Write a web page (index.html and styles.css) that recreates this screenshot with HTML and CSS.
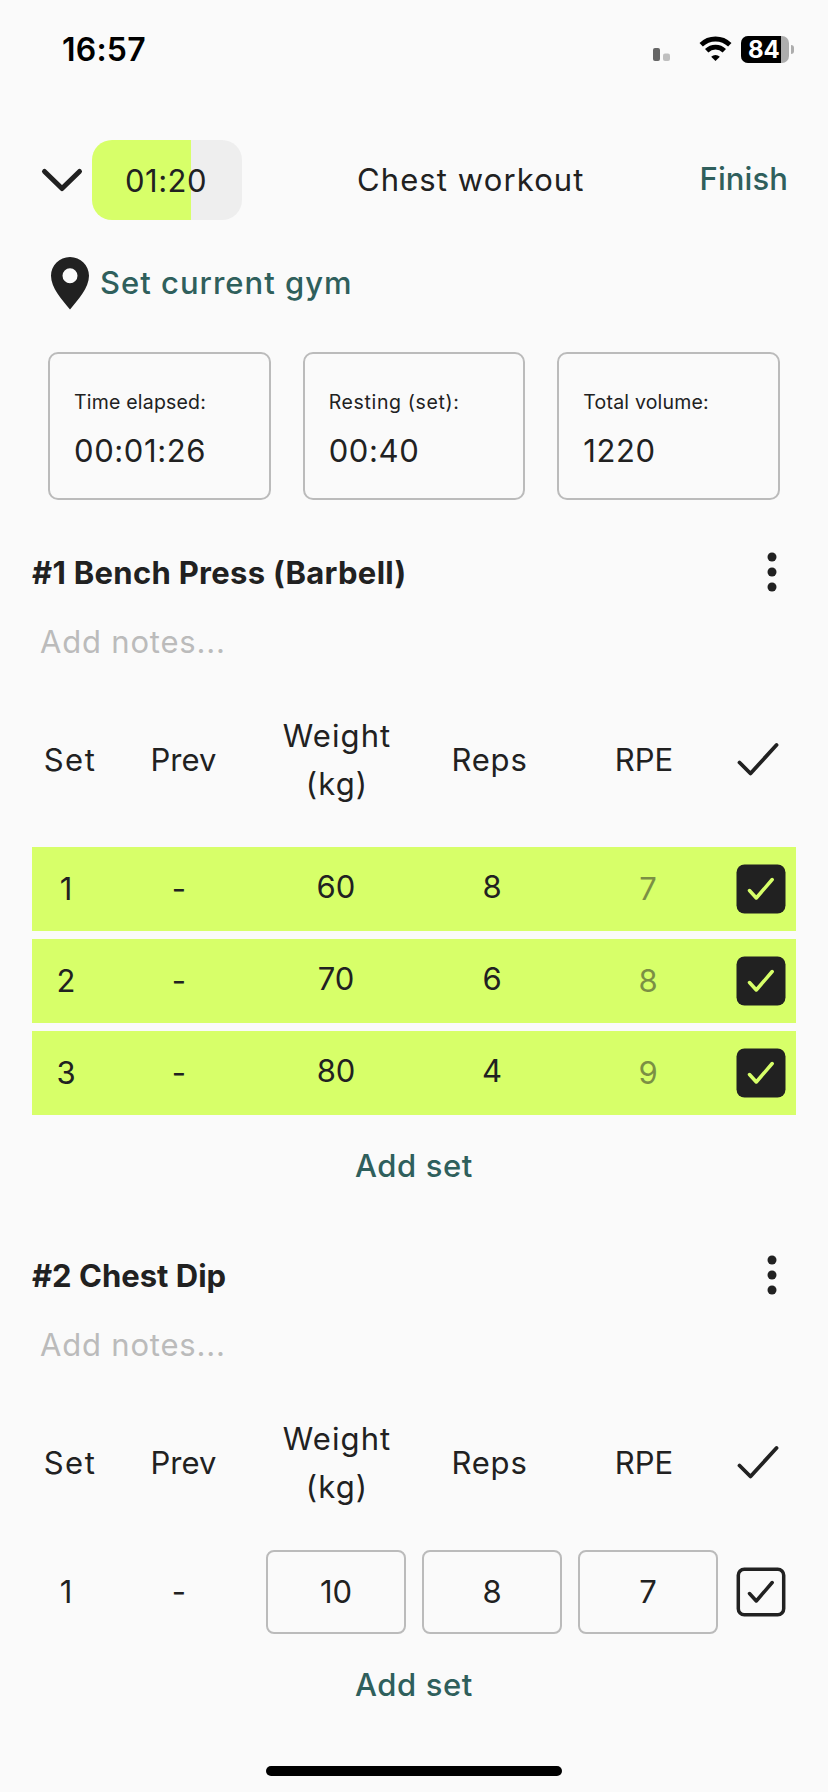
FILE: index.html
```html
<!DOCTYPE html>
<html lang="en">
<head>
<meta charset="utf-8">
<title>Chest workout</title>
<link rel="stylesheet" href="styles.css">
</head>
<body>
<header class="status">
  <span class="clock">16:57</span>
  <svg class="signals" width="82" height="27" viewBox="0 0 82 27">
    <rect x="1" y="12" width="7" height="13" rx="2" fill="#666"/>
    <rect x="11" y="17.500" width="7" height="7.500" rx="2" fill="#bfbfbf"/>
    <g fill="none" stroke="#000" stroke-width="4.800">
      <path d="M49.200 8.800a20.500 20.500 0 0 1 28.600 0"/>
      <path d="M54.700 14.800a12.500 12.500 0 0 1 17.600 0"/>
    </g>
    <path d="M63.500 25l-4.300-4.200a6.200 6.200 0 0 1 8.600 0z" fill="#000"/>
  </svg>
  <span class="battery"><span class="level">84</span></span><span class="nub"></span>
</header>

<nav class="topbar">
  <svg class="chevron" width="44" height="30" viewBox="0 0 44 30"><path d="M4.500 6.500L22 23.500L39.500 6.500" fill="none" stroke="#212121" stroke-width="5" stroke-linecap="round" stroke-linejoin="round"/></svg>
  <div class="timer">01:20</div>
  <h1 class="title">Chest workout</h1>
  <a class="link finish">Finish</a>
</nav>

<div class="gym">
  <svg class="pin" width="38" height="53" viewBox="0 0 38 53"><path fill="#212121" fill-rule="evenodd" d="M19 0C8.500 0 0 8.300 0 18.700C0 31 11 42.500 19 52.500C27 42.500 38 31 38 18.700C38 8.300 29.500 0 19 0zM19 11.300a7.500 7.500 0 1 1 0 15a7.500 7.500 0 0 1 0-15z"/></svg>
  <a class="link gym-link">Set current gym</a>
</div>

<section class="stats">
  <div class="stat"><span class="label">Time elapsed:</span><span class="value">00:01:26</span></div>
  <div class="stat"><span class="label label-wide">Resting (set):</span><span class="value">00:40</span></div>
  <div class="stat"><span class="label">Total volume:</span><span class="value">1220</span></div>
</section>

<section class="exercise">
  <div class="heading"><h2 class="spaced">#1 Bench Press (Barbell)</h2>
    <svg class="menu" width="10" height="40" viewBox="0 0 10 40" fill="#212121"><circle cx="5" cy="5" r="4.500"/><circle cx="5" cy="20" r="4.500"/><circle cx="5" cy="35" r="4.500"/></svg></div>
  <div class="notes">Add notes...</div>
  <div class="head">
    <span class="h-set">Set</span><span>Prev</span><span class="h-weight">Weight<br>(kg)</span><span class="h-reps">Reps</span><span>RPE</span>
    <svg class="tick" width="42" height="36" viewBox="0 0 42 36"><path d="M2.500 20.500L13.500 31.500L39.500 3" fill="none" stroke="#212121" stroke-width="3.800" stroke-linecap="round" stroke-linejoin="round"/></svg>
  </div>
  <div class="rows">
    <div class="row done"><span>1</span><span>-</span><span class="cell">60</span><span class="cell">8</span><span class="cell rpe">7</span><svg class="box" viewBox="0 0 50 50"><rect x="0.500" y="0.500" width="49" height="49" rx="8"/><path d="M13.500 26.500L20.300 34L36.200 15.500"/></svg></div>
    <div class="row done"><span>2</span><span>-</span><span class="cell">70</span><span class="cell">6</span><span class="cell rpe">8</span><svg class="box" viewBox="0 0 50 50"><rect x="0.500" y="0.500" width="49" height="49" rx="8"/><path d="M13.500 26.500L20.300 34L36.200 15.500"/></svg></div>
    <div class="row done"><span>3</span><span>-</span><span class="cell">80</span><span class="cell">4</span><span class="cell rpe">9</span><svg class="box" viewBox="0 0 50 50"><rect x="0.500" y="0.500" width="49" height="49" rx="8"/><path d="M13.500 26.500L20.300 34L36.200 15.500"/></svg></div>
  </div>
  <a class="link add">Add set</a>
</section>

<section class="exercise second">
  <div class="heading"><h2>#2 Chest Dip</h2>
    <svg class="menu" width="10" height="40" viewBox="0 0 10 40" fill="#212121"><circle cx="5" cy="5" r="4.500"/><circle cx="5" cy="20" r="4.500"/><circle cx="5" cy="35" r="4.500"/></svg></div>
  <div class="notes">Add notes...</div>
  <div class="head">
    <span class="h-set">Set</span><span>Prev</span><span class="h-weight">Weight<br>(kg)</span><span class="h-reps">Reps</span><span>RPE</span>
    <svg class="tick" width="42" height="36" viewBox="0 0 42 36"><path d="M2.500 20.500L13.500 31.500L39.500 3" fill="none" stroke="#212121" stroke-width="3.800" stroke-linecap="round" stroke-linejoin="round"/></svg>
  </div>
  <div class="rows">
    <div class="row"><span>1</span><span>-</span><span class="cell">10</span><span class="cell">8</span><span class="cell">7</span><svg class="box" viewBox="0 0 50 50"><rect x="2.300" y="2.300" width="45.400" height="45.400" rx="6"/><path d="M13.500 26.500L20.300 34L36.200 15.500"/></svg></div>
  </div>
  <a class="link add">Add set</a>
</section>
<div class="home"></div>
</body>
</html>
```
FILE: styles.css
```css
* { box-sizing: border-box; margin: 0; padding: 0; }
body {
  width: 828px;
  height: 1792px;
  display: flex;
  flex-direction: column;
  overflow: hidden;
  background: #fafafa;
  color: #212121;
  font-family: Inter, "Open Sans", sans-serif;
  font-size: 31px;
  line-height: 48px;
  font-weight: 380;
}

/* Status bar */
.status { height: 140px; padding: 36px 34px 0 62px; display: flex; align-items: flex-start; color: #000; }
.clock { flex: 1; font-size: 32px; line-height: 28px; font-weight: 600; letter-spacing: .2px; }
.signals { margin-right: 7px; }
.battery { width: 48px; height: 27px; border-radius: 7px; overflow: hidden; background: #adadad; display: flex; }
.level { width: 40px; background: #000; color: #fff; font-size: 24px; line-height: 27px; font-weight: 700; padding-left: 7px; }
.nub { width: 3px; height: 9px; margin: 9px 0 0 2px; border-radius: 0 3px 3px 0; background: #adadad; }

/* Workout header */
.topbar { height: 80px; padding: 0 40px; display: flex; align-items: center; }
.chevron { margin-right: 8px; }
.timer { width: 150px; height: 80px; border-radius: 20px; text-align: center; line-height: 82px; letter-spacing: .5px; padding-right: 2px; background: linear-gradient(to right, #d7ff69 99px, #eee 99px); }
.title { flex: 1; text-align: center; font-size: inherit; font-weight: inherit; letter-spacing: 1.1px; }
.link { color: #2f5f5c; font-weight: 500; white-space: nowrap; }
.finish { line-height: 46px; padding-bottom: 2px; letter-spacing: .1px; }

.gym { height: 58px; margin-top: 34px; padding-left: 51px; display: flex; align-items: center; gap: 11px; }
.gym-link { letter-spacing: 1px; }

/* Statistics */
.stats { margin: 40px 48px 0; display: grid; grid-template-columns: repeat(3, 1fr); gap: 32px; }
.stat { height: 148px; padding: 36px 0 0 24px; border: 2px solid #bbb; border-radius: 10px; display: flex; flex-direction: column; gap: 13px; white-space: nowrap; }
.label { font-size: 19.5px; line-height: 24px; font-weight: 400; letter-spacing: .2px; }
.label-wide { letter-spacing: .65px; }
.value { letter-spacing: .6px; }

/* Exercises */
.exercise { margin: 40px 32px 0; display: flex; flex-direction: column; }
.second { margin-top: 27px; }
.heading { height: 65px; padding-right: 19px; display: flex; align-items: center; justify-content: space-between; }
.heading h2 { font-size: inherit; font-weight: 700; }
.heading .spaced { letter-spacing: .3px; }
.menu { margin-bottom: 1px; }
.notes { height: 73px; padding-left: 8px; line-height: 73px; letter-spacing: .8px; color: #bbb; }
.head { height: 163px; display: grid; grid-template-columns: 76px 151px 156px 149px 160px 72px; align-items: center; justify-items: center; text-align: center; }
.tick { margin-right: 4px; }
.h-set { letter-spacing: 1.5px; }
.h-weight { letter-spacing: 1.1px; }
.h-reps { letter-spacing: .8px; }
.rows { margin-top: 6px; display: flex; flex-direction: column; gap: 8px; }
.row { height: 84px; display: grid; grid-template-columns: 68px 158px 148px 156px 156px 68px; align-items: center; text-align: center; }
.cell { width: 140px; justify-self: end; line-height: 80px; border: 2px solid #bbb; border-radius: 8px; }
.box { width: 50px; height: 50px; justify-self: end; fill: none; stroke: #212121; stroke-width: 3.5; stroke-linecap: round; stroke-linejoin: round; }
.done { background: #d7ff69; }
.done .cell { border-color: transparent; padding-bottom: 4px; line-height: 76px; }
.done .rpe { padding: 0; line-height: 80px; opacity: .5; }
.done .box rect { fill: #212121; stroke: none; }
.done .box path { stroke: #d7ff69; }
.add { height: 101px; line-height: 101px; text-align: center; letter-spacing: .6px; }

.home { width: 296px; height: 10px; margin: 31px auto 0; border-radius: 5px; background: #000; }
```
